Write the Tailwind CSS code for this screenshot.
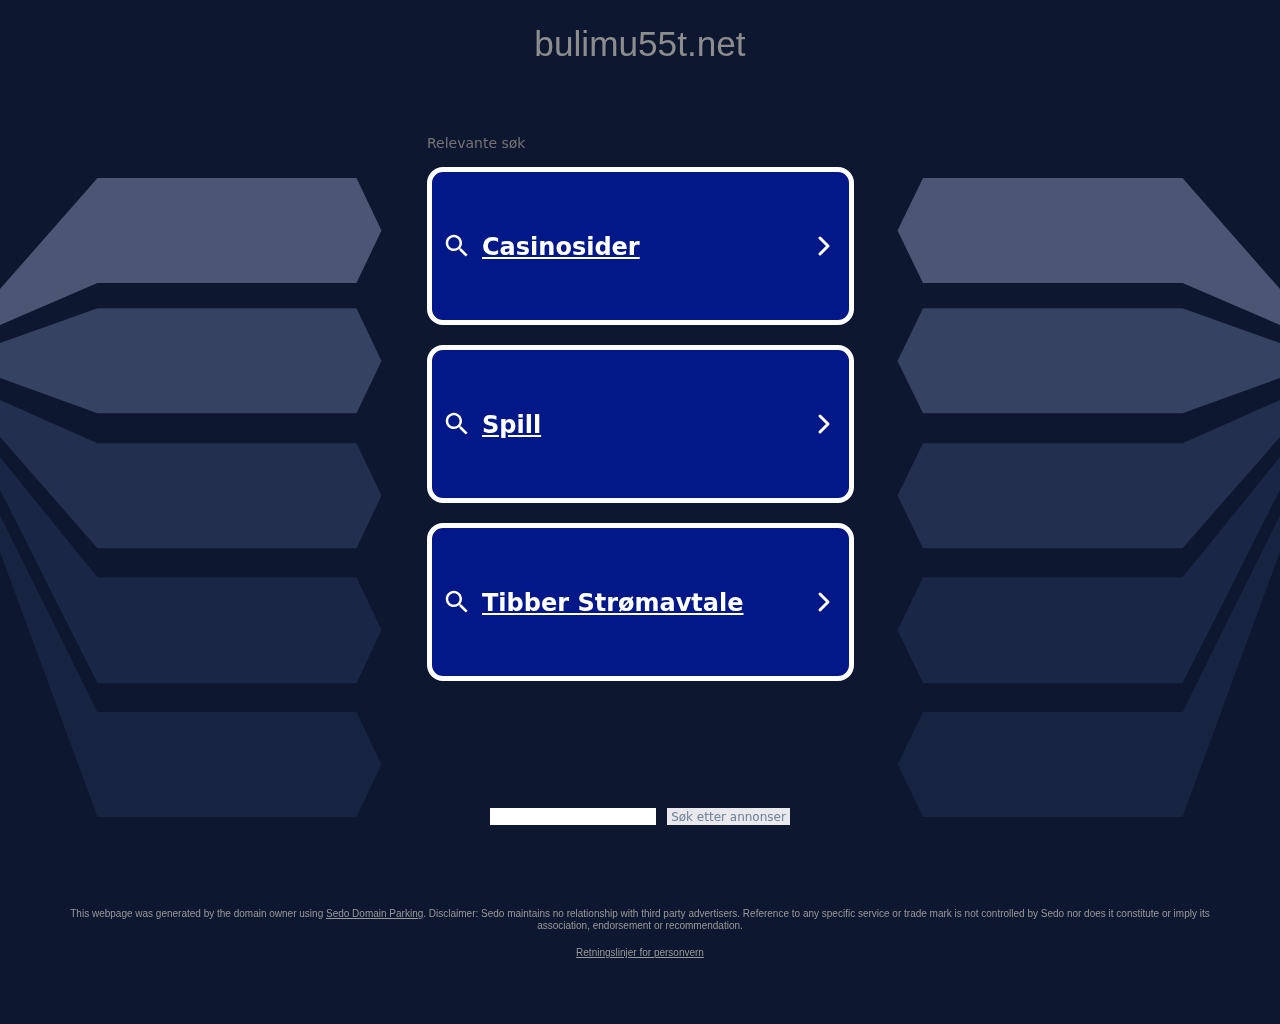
<!DOCTYPE html>
<html lang="no">
<head>
    <meta charset="UTF-8">
    <title>bulimu55t.net</title>
    <script src="https://cdn.jsdelivr.net/npm/@tailwindcss/browser@4"></script>
</head>
<body class="bg-[#0d172f] min-h-screen font-['DejaVu_Sans',sans-serif]">
    <div class="relative w-[1280px] h-[1024px] overflow-hidden">

        <!-- background shapes -->
        <svg class="absolute top-0 left-0" width="1280" height="1024" viewBox="0 0 1280 1024">
            <g fill="#4a5674">
                <polygon points="0,289 97.500,178 356.500,178 381.500,230.500 356.500,283 97.500,283 0,325"/>
                <polygon points="1280,289 1182.500,178 923,178 897.500,230.500 923,283 1182.500,283 1280,325"/>
            </g>
            <g fill="#364261">
                <polygon points="0,343 97.500,308.300 356.500,308.300 381.500,361 356.500,413.300 97.500,413.300 0,378"/>
                <polygon points="1280,343 1182.500,308.300 923,308.300 897.500,361 923,413.300 1182.500,413.300 1280,378"/>
            </g>
            <g fill="#232f4f">
                <polygon points="0,400 97.500,443.300 356.500,443.300 381.500,495.500 356.500,548.300 97.500,548.300 0,437"/>
                <polygon points="1280,400 1182.500,443.300 923,443.300 897.500,495.500 923,548.300 1182.500,548.300 1280,437"/>
            </g>
            <g fill="#192645">
                <polygon points="0,457 97.500,577.300 356.500,577.300 381.500,630 356.500,683.300 97.500,683.300 0,490"/>
                <polygon points="1280,457 1182.500,577.300 923,577.300 897.500,630 923,683.300 1182.500,683.300 1280,490"/>
            </g>
            <g fill="#162341">
                <polygon points="0,515 97.500,712 356.500,712 381.500,764.500 356.500,817 97.500,817 0,552"/>
                <polygon points="1280,515 1182.500,712 923,712 897.500,764.500 923,817 1182.500,817 1280,552"/>
            </g>
        </svg>

        <div class="relative flex flex-col items-center will-change-transform">
            <!-- Header -->
            <h1 class="mt-[23px] h-[41px] leading-[41px] text-[35.2px] font-normal text-[#8d8d8d] font-['Liberation_Sans',sans-serif]">bulimu55t.net</h1>

            <!-- Related searches -->
            <div class="w-[427px] mt-[71px]">
                <p class="pl-[0.5px] text-[14px] leading-[17px] text-[#757575] mb-[15px]">Relevante søk</p>
                <div class="flex flex-col gap-[20px]">
                    <a href="#" class="flex items-center h-[158px] border-[5px] border-white rounded-[16px] bg-[#021888] pl-[10px] pr-[13px] text-white">
                        <svg class="w-[30px] h-[30px] shrink-0" viewBox="0 0 24 24" fill="#fff"><path d="M15.5 14h-.79l-.28-.27C15.41 12.59 16 11.11 16 9.5 16 5.91 13.09 3 9.5 3S3 5.91 3 9.5 5.91 16 9.500 16c1.610 0 3.090-.59 4.230-1.570l.27.28v.79l5 4.990L20.490 19l-4.990-5zm-6 0C7.010 14 5 11.990 5 9.500S7.010 5 9.500 5 14 7.010 14 9.500 11.990 14 9.500 14z"/></svg>
                        <span class="ml-[10.5px] flex-1 pt-[2px] text-[24px] font-bold underline">Casinosider</span>
                        <svg class="w-[24px] h-[24px] shrink-0" viewBox="0 0 24 24" fill="none" stroke="#fff" stroke-width="3" stroke-linecap="round" stroke-linejoin="round"><path d="M8 4l8 8-8 8"/></svg>
                    </a>
                    <a href="#" class="flex items-center h-[158px] border-[5px] border-white rounded-[16px] bg-[#021888] pl-[10px] pr-[13px] text-white">
                        <svg class="w-[30px] h-[30px] shrink-0" viewBox="0 0 24 24" fill="#fff"><path d="M15.5 14h-.79l-.28-.27C15.41 12.59 16 11.11 16 9.5 16 5.91 13.09 3 9.5 3S3 5.91 3 9.5 5.91 16 9.500 16c1.610 0 3.090-.59 4.230-1.570l.27.28v.79l5 4.990L20.490 19l-4.990-5zm-6 0C7.010 14 5 11.990 5 9.500S7.010 5 9.500 5 14 7.010 14 9.500 11.990 14 9.500 14z"/></svg>
                        <span class="ml-[10.5px] flex-1 pt-[2px] text-[24px] font-bold underline">Spill</span>
                        <svg class="w-[24px] h-[24px] shrink-0" viewBox="0 0 24 24" fill="none" stroke="#fff" stroke-width="3" stroke-linecap="round" stroke-linejoin="round"><path d="M8 4l8 8-8 8"/></svg>
                    </a>
                    <a href="#" class="flex items-center h-[158px] border-[5px] border-white rounded-[16px] bg-[#021888] pl-[10px] pr-[13px] text-white">
                        <svg class="w-[30px] h-[30px] shrink-0" viewBox="0 0 24 24" fill="#fff"><path d="M15.5 14h-.79l-.28-.27C15.41 12.59 16 11.11 16 9.5 16 5.91 13.09 3 9.5 3S3 5.91 3 9.5 5.91 16 9.500 16c1.610 0 3.090-.59 4.230-1.570l.27.28v.79l5 4.990L20.490 19l-4.990-5zm-6 0C7.010 14 5 11.990 5 9.500S7.010 5 9.500 5 14 7.010 14 9.500 11.990 14 9.500 14z"/></svg>
                        <span class="ml-[10.5px] flex-1 pt-[2px] text-[24px] font-bold underline">Tibber Strømavtale</span>
                        <svg class="w-[24px] h-[24px] shrink-0" viewBox="0 0 24 24" fill="none" stroke="#fff" stroke-width="3" stroke-linecap="round" stroke-linejoin="round"><path d="M8 4l8 8-8 8"/></svg>
                    </a>
                </div>
            </div>

            <!-- Search -->
            <div class="flex mt-[127px] gap-[11px]">
                <input type="text" class="w-[166px] h-[17px] bg-white border-0 outline-none">
                <button class="h-[17px] w-[123px] pt-[2px] bg-[#e9e9ed] text-[#6e8299] text-[12px] leading-[15px] text-center">Søk etter annonser</button>
            </div>

            <!-- Footer -->
            <div class="w-[1150px] mt-[83px] text-center text-[10px] leading-[12px] text-[#999999] font-['Liberation_Sans',sans-serif]">
                <p>This webpage was generated by the domain owner using <a href="#" class="underline">Sedo Domain Parking</a>. Disclaimer: Sedo maintains no relationship with third party advertisers. Reference to any specific service or trade mark is not controlled by Sedo nor does it constitute or imply its association, endorsement or recommendation.</p>
                <p class="mt-[15px]"><a href="#" class="underline">Retningslinjer for personvern</a></p>
            </div>
        </div>
    </div>
</body>
</html>
